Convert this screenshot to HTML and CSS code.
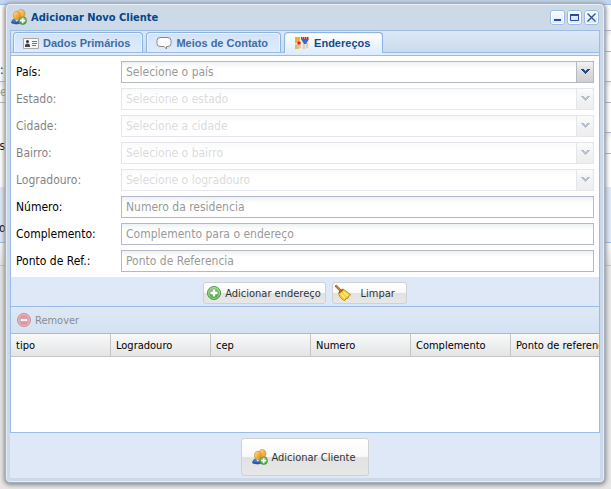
FILE: index.html
```html
<!DOCTYPE html>
<html lang="pt-BR">
<head>
<meta charset="utf-8">
<title>Adicionar Novo Cliente</title>
<link rel="stylesheet" href="styles.css">
</head>
<body>
<svg class="defs" width="0" height="0" aria-hidden="true">
  <defs>
    <linearGradient id="gold" x1="0" y1="0" x2="1" y2="1"><stop offset="0" stop-color="#ffe3a0"/><stop offset=".5" stop-color="#f4b040"/><stop offset="1" stop-color="#d8861a"/></linearGradient>
    <linearGradient id="blue" x1="0" y1="0" x2="0" y2="1"><stop offset="0" stop-color="#5b93dc"/><stop offset="1" stop-color="#1450a8"/></linearGradient>
    <linearGradient id="green" x1="0" y1="0" x2="0" y2="1"><stop offset="0" stop-color="#8fce83"/><stop offset="1" stop-color="#3f9a35"/></linearGradient>
    <symbol id="users" viewBox="0 0 16 16">
      <path d="M7 10V5Q6.500.6 10 .5q3.700 0 4 3.800.1 1.700-1 3l1.500 1.200.7 2.500z" fill="url(#gold)" stroke="#c08526" stroke-width=".6"/>
      <path d="M.5 14Q.5 10.800 3.200 10L8 10q2.500 1 2.500 4-5 2.200-10 0z" fill="url(#blue)" stroke="#1d4f9c" stroke-width=".6"/>
      <path d="M3.800 10 5.800 12.800 8 10z" fill="#e8f1fc"/>
      <ellipse cx="5.900" cy="6.500" rx="3.400" ry="4.200" fill="url(#gold)" stroke="#c28322" stroke-width=".6"/>
      <circle cx="11.700" cy="11.700" r="3.800" fill="url(#green)" stroke="#4b9a42" stroke-width=".8"/>
      <path d="M11.700 9.200v5M9.200 11.700h5" stroke="#fff" stroke-width="1.700"/>
    </symbol>
  </defs>
</svg>
<div class="stage">
  <div class="backdrop" aria-hidden="true">
    <div class="bd-bar"></div>
    <div class="bd-form">
      <div class="bd-field inset"></div>
      <div class="bd-label">:</div>
      <div class="bd-field">e</div>
      <div class="bd-label"></div>
      <div class="bd-field inset"></div>
      <div class="bd-note">as</div>
    </div>
    <div class="bd-tools">o</div>
    <div class="bd-head"></div>
  </div>

  <section class="window" aria-labelledby="win-title">
    <header class="titlebar">
      <svg class="icon" viewBox="0 0 16 16"><use href="#users"/></svg>
      <h1 id="win-title">Adicionar Novo Cliente</h1>
      <button class="tool" type="button" aria-label="Minimizar"><svg viewBox="0 0 15 15"><path d="M4 10h7" stroke="#2b4c9b" stroke-width="2"/></svg></button>
      <button class="tool" type="button" aria-label="Maximizar"><svg viewBox="0 0 15 15"><path d="M3.500 4.500h8v6h-8z" fill="#d9e8fb" stroke="#2b4c9b"/><path d="M3 5h9" stroke="#2b4c9b" stroke-width="2"/></svg></button>
      <button class="tool" type="button" aria-label="Fechar"><svg viewBox="0 0 15 15"><path d="M3.500 3.500l8 8M11.500 3.500l-8 8" stroke="#2b4c9b" stroke-width="1.300"/></svg></button>
    </header>

    <div class="panel">
      <nav class="tabs" role="tablist">
        <button class="tab" type="button" role="tab"><svg class="icon" viewBox="0 0 16 16"><path d="M.5 3.500h15v10H.5z" fill="#f7f7f7" stroke="#aaa"/><circle cx="4.500" cy="6.500" r="1.500" fill="#333"/><path d="M2 12V10.500q0-2 2.500-2T7 10.500V12z" fill="#444"/><path d="M9 6.500h5M9 8.500h5M9 10.500h4" stroke="#777"/></svg>Dados Primários</button>
        <button class="tab" type="button" role="tab"><svg class="icon" viewBox="0 0 16 16"><path d="M4 2.500h8q3 0 3 3v3q0 3-3 3h-1.500v2.500L8 11.500H4q-3 0-3-3v-3q0-3 3-3z" fill="#fdfdfd" stroke="#888"/></svg>Meios de Contato</button>
        <button class="tab active" type="button" role="tab" aria-selected="true"><svg class="icon" viewBox="0 0 16 16"><path d="M1 2h14v12H1z" fill="#eee8dc"/><path d="M1 2h5v3l-2 3H1z" fill="#f2ae36"/><path d="M1 10l4-1v5H1z" fill="#f3bd62"/><path d="M2 14V9M6 13V7M10 14V9M13 13V8" stroke="#b5b5b5"/><path d="M7 4h8l-3 5h-2z" fill="#3569ce"/><path d="M7 3h8" stroke="#d42222" stroke-width="2" stroke-dasharray="1.500 .5"/><circle cx="5" cy="8" r="1.700" fill="#e52614"/></svg>Endereços</button>
      </nav>
      <div class="tab-strip"></div>

      <form class="form">
        <label for="pais">País:</label>
        <div class="combo"><select id="pais"><option>Selecione o país</option></select><span class="trigger"><svg viewBox="0 0 9 6"><path d="M0 0h3v1h1v1h1V1h1V0h3v1H8v1H7v1H6v1H5v1H4V4H3V3H2V2H1V1H0z" fill="#2b4a80"/></svg></span></div>
        <label class="off" for="estado">Estado:</label>
        <div class="combo off"><select id="estado" disabled><option>Selecione o estado</option></select><span class="trigger"><svg viewBox="0 0 9 6"><path d="M0 0h3v1h1v1h1V1h1V0h3v1H8v1H7v1H6v1H5v1H4V4H3V3H2V2H1V1H0z" fill="#2b4a80"/></svg></span></div>
        <label class="off" for="cidade">Cidade:</label>
        <div class="combo off"><select id="cidade" disabled><option>Selecione a cidade</option></select><span class="trigger"><svg viewBox="0 0 9 6"><path d="M0 0h3v1h1v1h1V1h1V0h3v1H8v1H7v1H6v1H5v1H4V4H3V3H2V2H1V1H0z" fill="#2b4a80"/></svg></span></div>
        <label class="off" for="bairro">Bairro:</label>
        <div class="combo off"><select id="bairro" disabled><option>Selecione o bairro</option></select><span class="trigger"><svg viewBox="0 0 9 6"><path d="M0 0h3v1h1v1h1V1h1V0h3v1H8v1H7v1H6v1H5v1H4V4H3V3H2V2H1V1H0z" fill="#2b4a80"/></svg></span></div>
        <label class="off" for="logradouro">Logradouro:</label>
        <div class="combo off"><select id="logradouro" disabled><option>Selecione o logradouro</option></select><span class="trigger"><svg viewBox="0 0 9 6"><path d="M0 0h3v1h1v1h1V1h1V0h3v1H8v1H7v1H6v1H5v1H4V4H3V3H2V2H1V1H0z" fill="#2b4a80"/></svg></span></div>
        <label for="numero">Número:</label>
        <input id="numero" type="text" placeholder="Numero da residencia">
        <label for="complemento">Complemento:</label>
        <input id="complemento" type="text" placeholder="Complemento para o endereço">
        <label for="ref">Ponto de Ref.:</label>
        <input id="ref" type="text" placeholder="Ponto de Referencia">
      </form>

      <div class="form-actions">
        <button class="btn" type="button"><svg class="icon" viewBox="0 0 16 16"><circle cx="8" cy="8" r="6.500" fill="url(#green)" stroke="#4c9a44"/><circle cx="8" cy="8" r="5.400" fill="none" stroke="#b9e0b2" stroke-width=".8"/><path d="M8 4.500v7M4.500 8h7" stroke="#fff" stroke-width="2.400"/></svg>Adicionar endereço</button>
        <button class="btn wide" type="button"><svg class="icon" viewBox="0 0 16 16"><path d="M1.200 1.200 5.500 5.500" stroke="#9a5a1c" stroke-width="2.400" stroke-linecap="round"/><path d="M1.400 1.200 5 4.800" stroke="#e0a860" stroke-linecap="round"/><path d="M3.500 8.500Q4.500 4.500 8 4L15.500 9.500q-.5 1.500-2 2l-.5 1.800-2 .2-1 2Q5.500 14.500 3.500 8.500z" fill="#f5d432" stroke="#a87c10" stroke-width=".8"/><path d="M4 8 8 4.500" stroke="#b4391c" stroke-width="1.300"/><path d="M6 8.500l4 4.500M8.500 7l4 3.800" stroke="#fff19a" stroke-width="1.100"/></svg><span>Limpar</span></button>
      </div>

      <div class="grid-tools">
        <button class="flat" type="button" disabled><svg class="icon" viewBox="0 0 16 16"><circle cx="8" cy="8" r="6.500" fill="#e24b45" stroke="#c93e3a"/><circle cx="8" cy="8" r="5.400" fill="none" stroke="#f3a8a4" stroke-width=".8"/><path d="M4.500 8h7" stroke="#fff" stroke-width="2.400"/></svg>Remover</button>
      </div>
      <div class="grid">
        <table>
          <thead><tr><th>tipo</th><th>Logradouro</th><th>cep</th><th>Numero</th><th>Complemento</th><th>Ponto de referencia</th></tr></thead>
        </table>
      </div>
    </div>

    <footer class="footer">
      <button class="btn large" type="button"><svg class="icon" viewBox="0 0 16 16"><use href="#users"/></svg>Adicionar Cliente</button>
    </footer>
  </section>
</div>
</body>
</html>
```
FILE: styles.css
```css
* { box-sizing: border-box; }
body { margin: 0; background: #e6e6e6; }
body, button, input, select {
  font-family: Tahoma, "DejaVu Sans Condensed", "DejaVu Sans", sans-serif;
  font-size: 11px;
}
button, select, input { margin: 0; color: inherit; }
.defs { display: block; height: 0; }
.icon { display: block; flex: none; width: 16px; height: 16px; }

.stage { display: grid; min-height: 100vh; }
.backdrop, .window { grid-area: 1 / 1; min-width: 0; }

/* Page behind the window */
.backdrop { font-size: 12px; overflow: hidden; }
.bd-bar { height: 5px; background: #c3d7f0; border-bottom: 1px solid #99bce8; }
.bd-form { height: 182px; padding-top: 25px; background: #fff; }
.bd-field {
  height: 22px;
  border: solid #b5b8c8;
  border-width: 1px 0;
  background: linear-gradient(#eef1f2, #fff 6px);
  color: #999;
  line-height: 20px;
}
.bd-field.inset { margin-left: 8px; }
.bd-label { height: 29px; line-height: 36px; }
.bd-note { line-height: 14px; margin-top: -15px; margin-left: -7px; }
.bd-tools { height: 56px; padding-top: 34px; background: #dfe8f6; border-bottom: 1px solid #99bce8; text-indent: -1px; }
.bd-head { height: 23px; background: linear-gradient(#f9f9f9, #e6e6e6); border-bottom: 1px solid #c5c5c5; }

.window {
  display: flex;
  flex-direction: column;
  margin: 3px 6px 6px 5px;
  padding: 0 4px 4px;
  border: 1px solid #a2b1c5;
  border-radius: 5px;
  background: #ced9e7;
  box-shadow: inset 0 0 0 1px #e6edf6, 0 1px 4px 1px #888;
}
.titlebar { display: flex; align-items: center; gap: 2px; height: 26px; padding: 0 1px; }
.titlebar h1 { flex: 1; margin: 0 0 0 2px; font-size: 11px; color: #04468c; }
.tool {
  width: 15px;
  height: 15px;
  padding: 0;
  border: 0;
  border-radius: 3px;
  background: linear-gradient(#fff, #d5e6fb);
  box-shadow: inset 0 0 0 1px #99bce8, inset 0 0 0 2px #fff;
}
.tool svg { display: block; width: 15px; height: 15px; }

.panel {
  display: flex;
  flex: 1;
  flex-direction: column;
  border: 1px solid #99bce8;
}
.tabs {
  display: flex;
  align-items: flex-end;
  gap: 3px;
  height: 22px;
  padding: 0 2px;
  background: linear-gradient(#dde8f5, #cbdbef);
  border-bottom: 1px solid #99bce8;
}
.tab {
  display: flex;
  align-items: center;
  gap: 4px;
  height: 20px;
  padding: 0 12px 0 9px;
  border: 1px solid #8db3e3;
  border-bottom: 0;
  border-radius: 4px 4px 0 0;
  background: linear-gradient(#d3e3f8, #deecfd);
  box-shadow: inset 1px 1px #eaf3fe, inset -1px 0 #eaf3fe;
  color: #416da3;
  font: bold 11px "Liberation Sans", Arial, sans-serif;
}
.tab.active { height: 21px; margin-bottom: -1px; background: linear-gradient(#fff, #deecfd); color: #15498b; }
.tab-strip { height: 3px; background: #deecfd; border-bottom: 1px solid #99bce8; }

.form {
  display: grid;
  grid-template-columns: 100px 1fr;
  column-gap: 5px;
  row-gap: 5px;
  padding: 5px;
  background: #fff;
  font-size: 12px;
}
.form label { line-height: 22px; }
.form input, .form select {
  width: 100%;
  height: 22px;
  padding: 0 4px;
  border: 1px solid #b5b8c8;
  border-radius: 0;
  background: linear-gradient(#eef1f2, #fff 6px);
  color: #999;
  font-size: 12px;
}
.form input::placeholder { color: #999; opacity: 1; }
.form select { display: block; appearance: none; opacity: 1; }
.combo { position: relative; }
.off { opacity: .5; }
.combo.off { opacity: .35; }
.trigger {
  position: absolute;
  inset: 0 0 0 auto;
  display: grid;
  place-items: center;
  width: 18px;
  border: 1px solid #b5b8c8;
  border-radius: 0 2px 2px 0;
  background: linear-gradient(#f5f5f5, #dcdcdc 50%, #d0d0d0);
  pointer-events: none;
}
.trigger svg { width: 9px; height: 6px; }

.form-actions {
  display: flex;
  justify-content: center;
  gap: 6px;
  padding: 5px 0 2px;
  background: #dfe8f6;
}
.btn {
  display: flex;
  align-items: center;
  gap: 3px;
  height: 22px;
  padding: 0 4px 0 2px;
  border: 1px solid #d1d1d1;
  border-radius: 3px;
  background: linear-gradient(#fff, #f9f9f9 48%, #e2e2e2 52%, #e7e7e7);
  color: #333;
}
.btn.wide { width: 75px; }
.btn.wide span { flex: 1; text-align: center; }
.btn.large { height: 38px; padding: 0 12px 0 10px; }

.grid-tools {
  height: 28px;
  padding: 5px;
  border: solid #99bce8;
  border-width: 1px 0;
  background: linear-gradient(#dfe9f5, #d3e1f1);
}
.flat { display: flex; align-items: center; gap: 3px; padding: 0; border: 0; background: none; color: #333; opacity: .5; }
.grid { flex: 1; overflow: hidden; background: #fff; }
table { width: 600px; table-layout: fixed; border-collapse: separate; border-spacing: 0; }
th {
  height: 23px;
  padding: 0 5px;
  border: solid #c5c5c5;
  border-width: 0 1px 1px 0;
  background: linear-gradient(#f9f9f9, #e3e4e6);
  color: #000;
  font-weight: normal;
  text-align: left;
  white-space: nowrap;
}
.footer { display: flex; justify-content: center; padding: 5px 0 2px; background: #dfe8f6; }
```
